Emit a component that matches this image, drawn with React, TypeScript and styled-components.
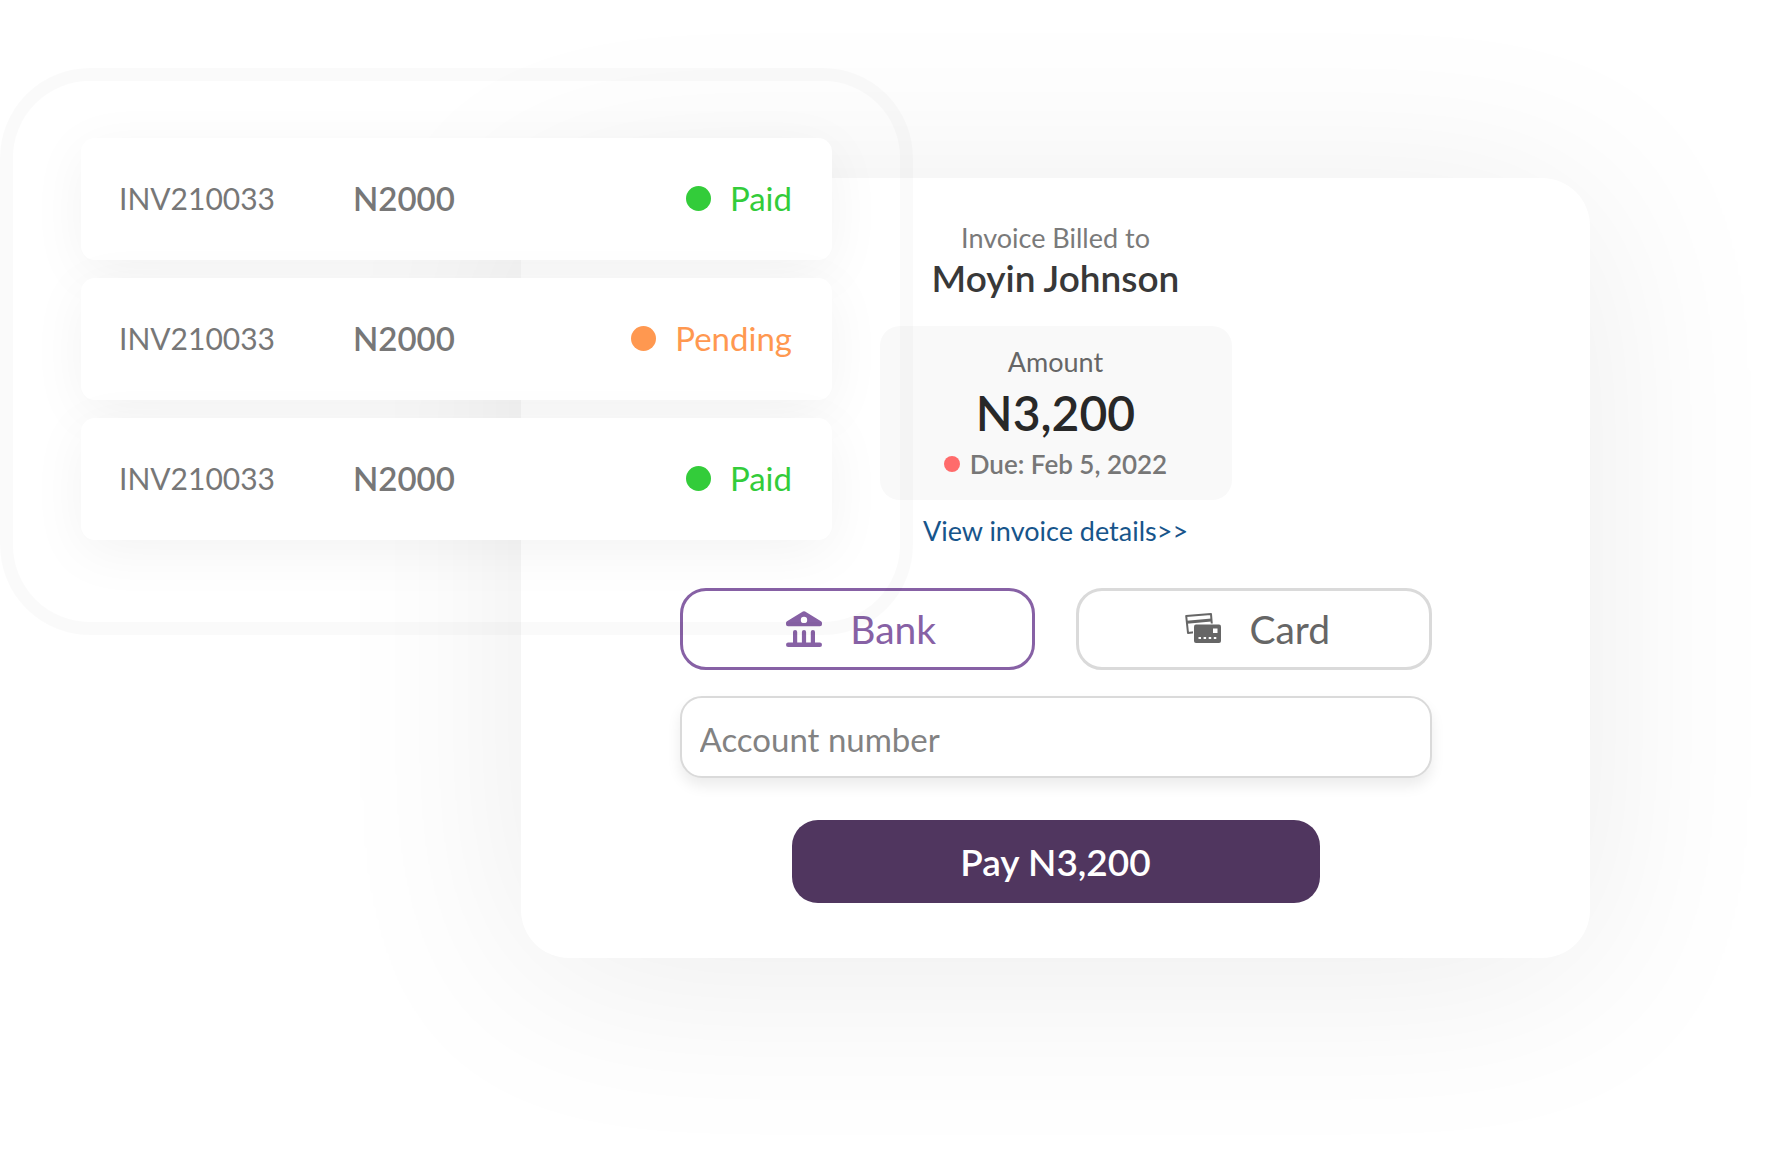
import React from "react";
import styled, { createGlobalStyle } from "styled-components";

const GlobalStyle = createGlobalStyle`
  *, *::before, *::after { box-sizing: border-box; }
  body {
    margin: 0;
    background: #fff;
    font-family: Lato, "Open Sans", sans-serif;
  }
`;

const Page = styled.main`
  display: grid;
  grid-template-columns: 81fr 440fr 311fr 758fr 191fr;
  align-items: start;
  min-height: 100vh;
  overflow: hidden;
`;

const PaymentCard = styled.section`
  grid-row: 1;
  grid-column: 3 / 5;
  margin-top: 178px;
  padding: 42px 0 55px;
  border-radius: 48px;
  background: #fff;
  box-shadow: 0 16px 200px rgba(0, 0, 0, 0.08);
  display: flex;
  flex-direction: column;
  align-items: center;
`;

const BilledLabel = styled.p`
  margin: 0;
  font-size: 27px;
  line-height: 36px;
  color: #7a7a7a;
`;

const Customer = styled.h1`
  margin: 0;
  font-size: 37px;
  font-weight: 600;
  line-height: 44px;
  color: #383838;
`;

const AmountBox = styled.div`
  display: flex;
  flex-direction: column;
  align-items: center;
  width: 352px;
  margin-top: 26px;
  padding: 18px 0;
  border-radius: 20px;
  background: #f9f9f9;
`;

const AmountLabel = styled.span`
  font-size: 27px;
  line-height: 36px;
  color: #666;
`;

const Amount = styled.strong`
  font-size: 48px;
  font-weight: 600;
  line-height: 66px;
  color: #282828;
`;

const Due = styled.span`
  display: flex;
  align-items: center;
  gap: 10px;
  font-size: 26px;
  font-weight: 600;
  line-height: 36px;
  color: #777;
`;

const Dot = styled.i<{ $size: number; $color: string }>`
  flex: none;
  width: ${(p) => p.$size}px;
  height: ${(p) => p.$size}px;
  border-radius: 50%;
  background: ${(p) => p.$color};
`;

const DetailsLink = styled.a`
  margin-top: 13px;
  font-size: 27px;
  line-height: 36px;
  color: #17558b;
  text-decoration: none;
`;

const Form = styled.form`
  display: flex;
  flex-direction: column;
  align-items: center;
  width: 752px;
  margin-top: 39px;
`;

const Methods = styled.div`
  display: grid;
  grid-template-columns: 1fr 1fr;
  gap: 41px;
  width: 100%;
`;

const Method = styled.button<{ $active?: boolean }>`
  display: flex;
  align-items: center;
  justify-content: center;
  gap: 28px;
  height: 82px;
  padding: 0 0 0 8px;
  border: 3px solid ${(p) => (p.$active ? "#8761a5" : "#dadada")};
  border-radius: 26px;
  background: transparent;
  color: ${(p) => (p.$active ? "#8761a5" : "#666")};
  font-family: inherit;
  font-size: 39px;
  cursor: pointer;
`;

const AccountInput = styled.input`
  width: 100%;
  height: 82px;
  margin-top: 26px;
  padding: 4px 18px 0;
  border: 2px solid #dadada;
  border-radius: 22px;
  background: #fff;
  box-shadow: 0 8px 14px rgba(0, 0, 0, 0.08);
  color: #555;
  font-family: inherit;
  font-size: 33px;
  &::placeholder { color: #828282; opacity: 1; }
`;

const PayButton = styled.button`
  width: 528px;
  height: 83px;
  margin-top: 42px;
  border: 0;
  border-radius: 26px;
  background: #50365f;
  color: #fff;
  font-family: inherit;
  font-size: 37px;
  font-weight: 600;
  cursor: pointer;
`;

const InvoiceList = styled.ul`
  position: relative;
  grid-row: 1;
  grid-column: 2 / 4;
  display: flex;
  flex-direction: column;
  gap: 18px;
  margin: 138px 0 0;
  padding: 0;
  list-style: none;
  &::before {
    content: "";
    position: absolute;
    inset: -70px -81px -95px;
    border: 13px solid rgba(0, 0, 0, 0.018);
    border-radius: 90px;
    pointer-events: none;
  }
`;

const InvoiceRow = styled.li`
  position: relative;
  display: grid;
  grid-template-columns: 234px 1fr auto;
  align-items: center;
  height: 122px;
  padding: 0 40px 2px 38px;
  border-radius: 14px;
  background: #fff;
  box-shadow: 0 12px 56px rgba(0, 0, 0, 0.05);
  font-size: 33px;
  color: #777;
`;

const InvoiceId = styled.span`
  font-size: 30px;
`;

const Price = styled.span`
  font-weight: 600;
`;

const Status = styled.span<{ $color: string }>`
  display: flex;
  align-items: center;
  gap: 19px;
  color: ${(p) => p.$color};
`;

const BankIcon = () => (
  <svg width="36" height="36" viewBox="0 0 36 36" fill="currentColor" aria-hidden="true">
    <path
      fillRule="evenodd"
      d="M16.900.5a2 2 0 0 1 2.200 0L35 10.300a1.900 1.900 0 0 1 1 1.700v1.200a2 2 0 0 1-2 2H2a2 2 0 0 1-2-2V12a1.900 1.900 0 0 1 1-1.700zM18 5.700a3.200 3.200 0 1 0 0 6.400 3.200 3.200 0 0 0 0-6.400z"
    />
    <path d="M7 34V21a2.100 2.100 0 0 1 4.200 0v13zM15.900 34V21a2.100 2.100 0 0 1 4.200 0v13zM24.800 34V21a2.100 2.100 0 0 1 4.200 0v13z" />
    <rect y="31.600" width="36" height="4.400" rx="2.200" />
  </svg>
);

const CardIcon = () => (
  <svg width="36" height="36" viewBox="0 0 36 36" aria-hidden="true">
    <path d="M1.200 5 26 3l1.300 16L3 22z" fill="none" stroke="currentColor" strokeWidth="2" strokeLinejoin="round" />
    <path d="M1.700 9.700 26.400 7.600v3L2 12.700z" fill="currentColor" />
    <rect x="8" y="12.500" width="28" height="20" rx="2" fill="#fff" />
    <rect x="9" y="13.500" width="27" height="18.500" rx="2" fill="currentColor" />
    <rect x="28" y="17.500" width="4.500" height="4.500" fill="#fff" />
    <path d="M13.500 27h18" stroke="#fff" strokeWidth="2" strokeDasharray="2.500 2.600" />
  </svg>
);

const GREEN = "#33cc3a";
const ORANGE = "#ff9850";

const invoices = [
  { id: "INV210033", price: "N2000", status: "Paid", color: GREEN },
  { id: "INV210033", price: "N2000", status: "Pending", color: ORANGE },
  { id: "INV210033", price: "N2000", status: "Paid", color: GREEN },
];

export default function App() {
  return (
    <>
      <GlobalStyle />
      <Page>
        <PaymentCard>
          <BilledLabel>Invoice Billed to</BilledLabel>
          <Customer>Moyin Johnson</Customer>
          <AmountBox>
            <AmountLabel>Amount</AmountLabel>
            <Amount>N3,200</Amount>
            <Due>
              <Dot $size={16} $color="#ff6b6b" />
              Due: Feb 5, 2022
            </Due>
          </AmountBox>
          <DetailsLink href="#details">View invoice details&gt;&gt;</DetailsLink>
          <Form onSubmit={(e) => e.preventDefault()}>
            <Methods>
              <Method type="button" $active>
                <BankIcon />
                Bank
              </Method>
              <Method type="button">
                <CardIcon />
                Card
              </Method>
            </Methods>
            <AccountInput aria-label="Account number" placeholder="Account number" />
            <PayButton type="submit">Pay N3,200</PayButton>
          </Form>
        </PaymentCard>
        <InvoiceList>
          {invoices.map((inv, i) => (
            <InvoiceRow key={i}>
              <InvoiceId>{inv.id}</InvoiceId>
              <Price>{inv.price}</Price>
              <Status $color={inv.color}>
                <Dot $size={25} $color={inv.color} />
                {inv.status}
              </Status>
            </InvoiceRow>
          ))}
        </InvoiceList>
      </Page>
    </>
  );
}
